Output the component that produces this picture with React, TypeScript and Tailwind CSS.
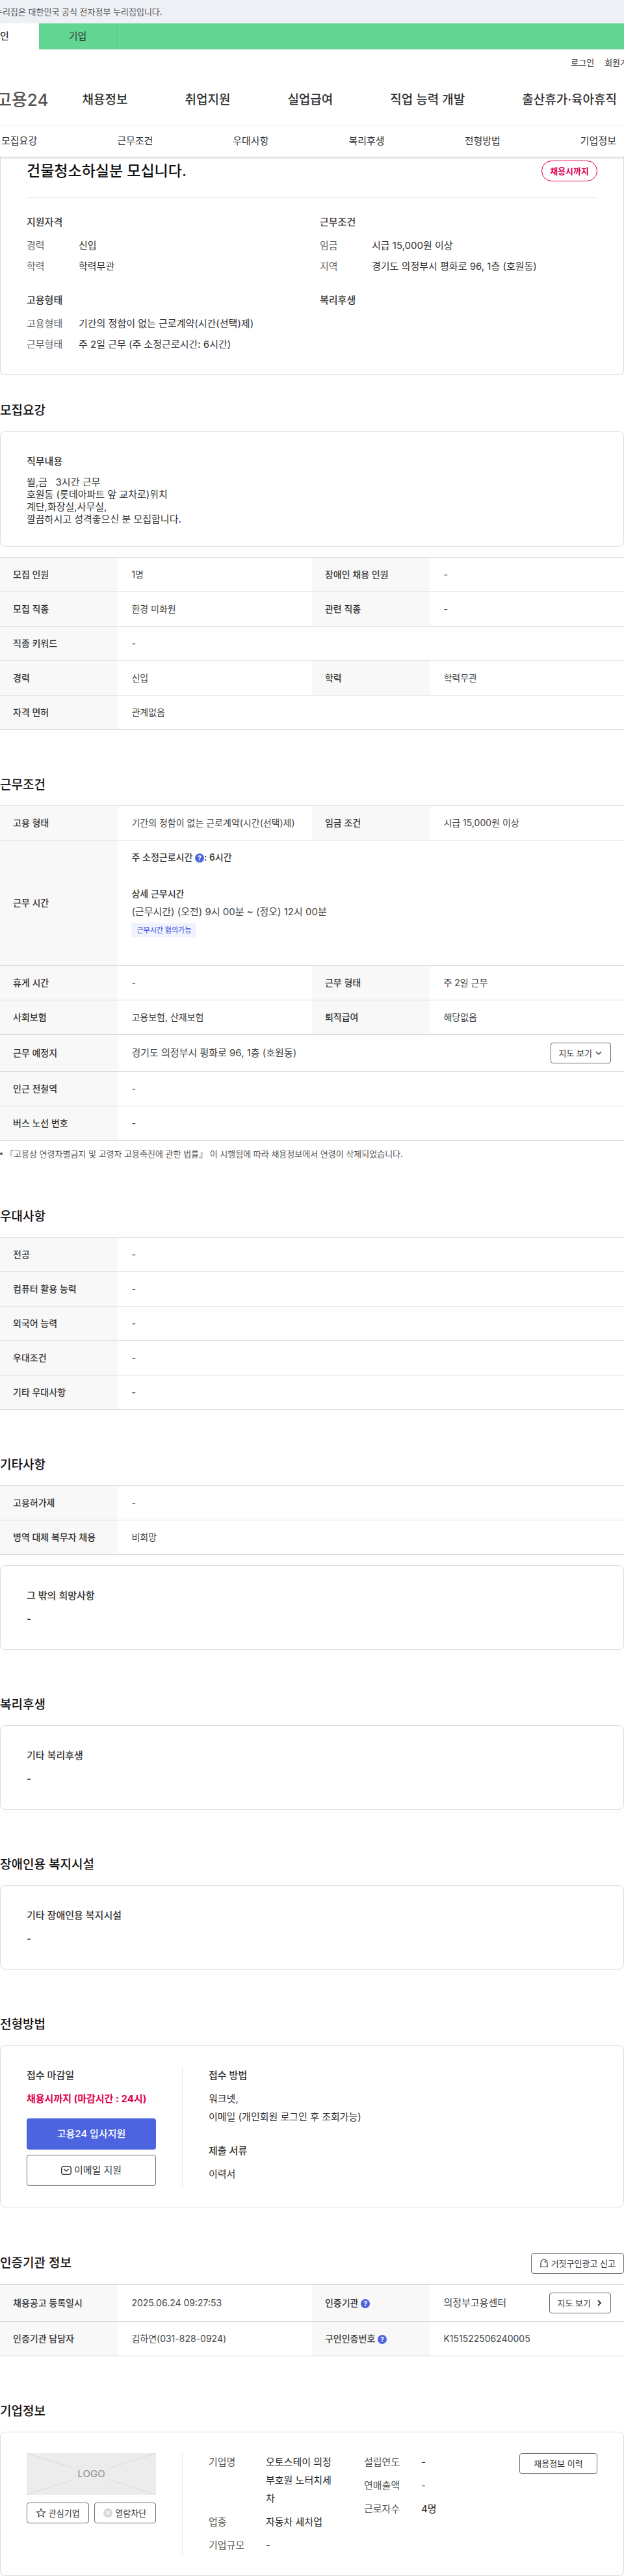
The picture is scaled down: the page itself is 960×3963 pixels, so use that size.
import type { ReactNode } from "react";
import clsx from "clsx";

type Cell = { label: ReactNode; value: ReactNode };

const MAIN_MENU = ["채용정보", "취업지원", "실업급여", "직업 능력 개발", "출산휴가·육아휴직"];
const PAGE_TABS = ["모집요강", "근무조건", "우대사항", "복리후생", "전형방법", "기업정보"];

const SUMMARY = [
  { title: "지원자격", items: [["경력", "신입"], ["학력", "학력무관"]] },
  { title: "근무조건", items: [["임금", "시급 15,000원 이상"], ["지역", "경기도 의정부시 평화로 96, 1층 (호원동)"]] },
  {
    title: "고용형태",
    items: [["고용형태", "기간의 정함이 없는 근로계약(시간(선택)제)"], ["근무형태", "주 2일 근무 (주 소정근로시간: 6시간)"]],
  },
  { title: "복리후생", items: [] },
];

function Help() {
  return (
    <button
      type="button"
      className="inline-flex size-3.5 items-center justify-center rounded-full bg-[#4d64e0] align-middle text-[10px] leading-none font-bold text-white"
    >
      ?
    </button>
  );
}

function SmallButton({ children, className }: { children: ReactNode; className?: string }) {
  return (
    <button
      type="button"
      className={clsx(
        "flex h-8 shrink-0 items-center justify-center rounded border border-[#6b6b6b] bg-white text-[13px] text-[#333]",
        className
      )}
    >
      {children}
    </button>
  );
}

function Section({ title, action, first, children }: { title: string; action?: ReactNode; first?: boolean; children: ReactNode }) {
  return (
    <section className={first ? "pt-10" : "pt-[70px]"}>
      <div className="mb-4 flex items-center justify-between">
        <h2 className="text-[19px] leading-[30px] font-medium text-[#111]">{title}</h2>
        {action}
      </div>
      {children}
    </section>
  );
}

function Card({ children, className }: { children: ReactNode; className?: string }) {
  return <div className={clsx("rounded-lg border border-[#dcdcdc] px-10 py-8", className)}>{children}</div>;
}

function NoteCard({ title, className }: { title: string; className?: string }) {
  return (
    <Card className={className}>
      <h3 className="font-medium">{title}</h3>
      <p className="mt-2 font-medium">-</p>
    </Card>
  );
}

function InfoTable({ rows }: { rows: Cell[][] }) {
  return (
    <table className="w-full table-fixed border-t border-[#dcdcdc] text-sm leading-7">
      <colgroup>
        <col className="w-[19%]" />
        <col className="w-[31%]" />
        <col className="w-[19%]" />
        <col className="w-[31%]" />
      </colgroup>
      <tbody>
        {rows.map((row, i) => (
          <tr key={i} className="border-b border-[#dcdcdc]">
            {row.map((cell, j) => [
              <th key={`h${j}`} scope="row" className="bg-[#f8f8f8] px-5 py-3 text-left font-medium">
                {cell.label}
              </th>,
              <td
                key={`d${j}`}
                colSpan={row.length === 1 ? 3 : 1}
                className={clsx("px-5 py-3 text-[#444]", cell.value === "-" && "font-medium")}
              >
                {cell.value}
              </td>,
            ])}
          </tr>
        ))}
      </tbody>
    </table>
  );
}

function Header() {
  return (
    <header className="relative z-10 bg-white shadow-[0_1px_4px_rgba(0,0,0,0.25)]">
      <div className="overflow-hidden">
        <p className="-ml-2 flex h-9 items-center bg-[#edf1f5] text-[13px] text-[#555]">
          누리집은 대한민국 공식 전자정부 누리집입니다.
        </p>
        <nav className="flex h-10 bg-[#63d694]">
          <a href="#" className="-ml-15 flex w-30 items-center justify-center bg-white font-medium">
            개인
          </a>
          <a href="#" className="flex w-30 items-center justify-center border-r border-[#55c985]">
            기업
          </a>
        </nav>
        <div className="-mr-[18px] flex h-10 items-center justify-end gap-4 text-[13px]">
          <a href="#">로그인</a>
          <a href="#">회원가입</a>
        </div>
        <div className="flex h-19 items-center">
          <a href="#" className="-ml-1.5 text-[26px] font-medium text-[#555]">
            고용24
          </a>
          <nav className="ml-13 flex gap-22 text-[19px] font-medium whitespace-nowrap">
            {MAIN_MENU.map((m) => (
              <a key={m} href="#">
                {m}
              </a>
            ))}
          </nav>
        </div>
      </div>
      <nav className="flex h-12 items-center justify-between border-t border-[#ebebeb] box-content pr-3 pl-0.5">
        {PAGE_TABS.map((t) => (
          <a key={t} href="#">
            {t}
          </a>
        ))}
      </nav>
    </header>
  );
}

function Summary() {
  return (
    <div className="rounded-b-lg border border-t-0 border-[#dcdcdc] px-10 pt-1.5 pb-8">
      <div className="flex items-center justify-between border-b border-[#e8e8e8] pb-6">
        <h1 className="text-[23px] leading-8 font-medium text-[#111]">건물청소하실분 모십니다.</h1>
        <span className="flex h-8 items-center rounded-full border border-[#e0004f] px-3 text-[13px] font-bold text-[#e0004f]">
          채용시까지
        </span>
      </div>
      <div className="mt-6 grid grid-cols-2 gap-6">
        {SUMMARY.map((s) => (
          <div key={s.title}>
            <h3 className="mb-2 font-medium">{s.title}</h3>
            <dl className="flex flex-col gap-1">
              {s.items.map(([k, v]) => (
                <div key={k} className="flex">
                  <dt className="w-20 shrink-0 text-[#666]">{k}</dt>
                  <dd>{v}</dd>
                </div>
              ))}
            </dl>
          </div>
        ))}
      </div>
    </div>
  );
}

function WorkHours() {
  return (
    <div className="pb-[31px]">
      <p className="font-medium text-[#333]">
        주 소정근로시간 <Help />: 6시간
      </p>
      <p className="mt-7 font-medium text-[#333]">상세 근무시간</p>
      <p className="text-[15px]">(근무시간) (오전) 9시 00분 ~ (정오) 12시 00분</p>
      <span className="mt-[3px] flex h-[22px] w-fit items-center rounded bg-[#f1f2ff] px-2 text-[11px] font-medium text-[#4d64e0]">
        근무시간 협의가능
      </span>
    </div>
  );
}

function Logo() {
  return (
    <div className="relative flex h-16 items-center justify-center bg-[#ececec] font-medium text-[#999]">
      <svg className="absolute inset-0 size-full" viewBox="0 0 199 64" fill="none" stroke="#dadada" preserveAspectRatio="none">
        <path d="M0 0L72 23M199 0L127 23M0 64L72 41M199 64L127 41" />
      </svg>
      LOGO
    </div>
  );
}

function Pairs({ items }: { items: string[][] }) {
  return (
    <dl className="flex w-[199px] flex-col gap-2">
      {items.map(([k, v]) => (
        <div key={k} className="flex">
          <dt className="w-22 shrink-0 text-[#555]">{k}</dt>
          <dd className="text-[#222]">{v}</dd>
        </div>
      ))}
    </dl>
  );
}

export default function App() {
  return (
    <div className="overflow-hidden bg-white font-[Inter,'Noto_Sans_CJK_KR',sans-serif] text-[15px] leading-7 text-[#333]">
      <Header />
      <main>
        <Summary />

        <Section title="모집요강" first>
          <Card className="mb-4">
            <h3 className="mb-2 font-medium">직무내용</h3>
            <p className="leading-[19px] whitespace-pre-line">
              월,금 &nbsp; 3시간 근무{"\n"}호원동 (롯데아파트 앞 교차로)위치{"\n"}계단,화장실,사무실,{"\n"}깔끔하시고 성격좋으신 분 모집합니다.
            </p>
          </Card>
          <InfoTable
            rows={[
              [{ label: "모집 인원", value: "1명" }, { label: "장애인 채용 인원", value: "-" }],
              [{ label: "모집 직종", value: "환경 미화원" }, { label: "관련 직종", value: "-" }],
              [{ label: "직종 키워드", value: "-" }],
              [{ label: "경력", value: "신입" }, { label: "학력", value: "학력무관" }],
              [{ label: "자격 면허", value: "관계없음" }],
            ]}
          />
        </Section>

        <Section title="근무조건">
          <InfoTable
            rows={[
              [
                { label: "고용 형태", value: "기간의 정함이 없는 근로계약(시간(선택)제)" },
                { label: "임금 조건", value: "시급 15,000원 이상" },
              ],
              [{ label: "근무 시간", value: <WorkHours /> }],
              [{ label: "휴게 시간", value: "-" }, { label: "근무 형태", value: "주 2일 근무" }],
              [{ label: "사회보험", value: "고용보험, 산재보험" }, { label: "퇴직급여", value: "해당없음" }],
              [
                {
                  label: "근무 예정지",
                  value: (
                    <div className="flex items-center justify-between text-[15px]">
                      경기도 의정부시 평화로 96, 1층 (호원동)
                      <SmallButton className="gap-1 px-3">
                        지도 보기
                        <svg width="12" height="12" viewBox="0 0 12 12" fill="none" stroke="currentColor" strokeWidth="1.3">
                          <path d="M2 4l4 4 4-4" />
                        </svg>
                      </SmallButton>
                    </div>
                  ),
                },
              ],
              [{ label: "인근 전철역", value: "-" }],
              [{ label: "버스 노선 번호", value: "-" }],
            ]}
          />
          <p className="mt-2 flex items-center gap-1 text-[13px] leading-6 text-[#555]">
            <span className="size-1 rounded-full bg-[#555]" />
            『고용상 연령차별금지 및 고령자 고용촉진에 관한 법률』 이 시행됨에 따라 채용정보에서 연령이 삭제되었습니다.
          </p>
        </Section>

        <Section title="우대사항">
          <InfoTable
            rows={[
              [{ label: "전공", value: "-" }],
              [{ label: "컴퓨터 활용 능력", value: "-" }],
              [{ label: "외국어 능력", value: "-" }],
              [{ label: "우대조건", value: "-" }],
              [{ label: "기타 우대사항", value: "-" }],
            ]}
          />
        </Section>

        <Section title="기타사항">
          <InfoTable
            rows={[[{ label: "고용허가제", value: "-" }], [{ label: "병역 대체 복무자 채용", value: "비희망" }]]}
          />
          <NoteCard title="그 밖의 희망사항" className="mt-4" />
        </Section>

        <Section title="복리후생">
          <NoteCard title="기타 복리후생" />
        </Section>

        <Section title="장애인용 복지시설">
          <NoteCard title="기타 장애인용 복지시설" />
        </Section>

        <Section title="전형방법">
          <Card className="flex">
            <div className="mr-10 w-[199px] shrink-0">
              <h3 className="font-medium">접수 마감일</h3>
              <p className="mt-2 font-bold whitespace-nowrap text-[#e0004f]">채용시까지 (마감시간 : 24시)</p>
              <button type="button" className="mt-4 h-12 w-full rounded bg-[#4d64e0] font-medium text-white">
                고용24 입사지원
              </button>
              <button
                type="button"
                className="mt-2 flex h-12 w-full items-center justify-center gap-1 rounded border border-[#6b6b6b]"
              >
                <svg width="16" height="14" viewBox="0 0 16 14" fill="none" stroke="currentColor" strokeWidth="1.5">
                  <rect x="0.75" y="0.75" width="14.5" height="12.5" rx="3.5" />
                  <path d="M4.5 5.2L8 8l3.5-2.8" />
                </svg>
                이메일 지원
              </button>
            </div>
            <div className="border-l border-[#e8e8e8] pl-10">
              <h3 className="font-medium">접수 방법</h3>
              <p className="mt-2">워크넷,</p>
              <p>이메일 (개인회원 로그인 후 조회가능)</p>
              <h3 className="mt-6 font-medium">제출 서류</h3>
              <p className="mt-2">이력서</p>
            </div>
          </Card>
        </Section>

        <Section
          title="인증기관 정보"
          action={
            <SmallButton className="gap-1 px-3">
              <svg width="14" height="14" viewBox="0 0 14 14" fill="none" stroke="currentColor" strokeWidth="1.2">
                <path d="M2 12.4V6.2a5 5 0 0 1 10 0v6.2M0.5 12.5h13M7.4 3.8c1.3.1 2.2 1 2.3 2.2" />
              </svg>
              거짓구인광고 신고
            </SmallButton>
          }
        >
          <InfoTable
            rows={[
              [
                { label: "채용공고 등록일시", value: "2025.06.24 09:27:53" },
                {
                  label: (
                    <>
                      인증기관 <Help />
                    </>
                  ),
                  value: (
                    <div className="flex items-center justify-between text-[15px]">
                      의정부고용센터
                      <SmallButton className="gap-1 px-3">
                        지도 보기
                        <svg width="14" height="12" viewBox="0 0 14 12" fill="none" stroke="currentColor" strokeWidth="1.8">
                          <path d="M7 2l4 4-4 4" />
                        </svg>
                      </SmallButton>
                    </div>
                  ),
                },
              ],
              [
                { label: "인증기관 담당자", value: "김하연(031-828-0924)" },
                {
                  label: (
                    <>
                      구인인증번호 <Help />
                    </>
                  ),
                  value: "K151522506240005",
                },
              ],
            ]}
          />
        </Section>

        <Section title="기업정보">
          <Card className="flex">
            <div className="mr-10 w-[199px] shrink-0">
              <Logo />
              <div className="mt-3 flex gap-2">
                <SmallButton className="flex-1 gap-1">
                  <svg width="16" height="16" viewBox="0 0 16 16" fill="none" stroke="currentColor" strokeWidth="1.1">
                    <path d="M8 1.6l1.8 4.3 4.7.4-3.6 3 1.1 4.6L8 11.4l-4 2.5 1.1-4.6-3.6-3 4.7-.4z" />
                  </svg>
                  관심기업
                </SmallButton>
                <SmallButton className="flex-1 gap-1">
                  <svg width="14" height="14" viewBox="0 0 14 14" fill="none">
                    <circle cx="7" cy="7" r="7" fill="#d8d8d8" />
                    <path d="M4.2 4.2l5.6 5.6M9.8 4.2L4.2 9.8" stroke="#fff" strokeWidth="1.3" />
                  </svg>
                  열람차단
                </SmallButton>
              </div>
            </div>
            <div className="flex flex-1 items-start gap-10 border-l border-[#e8e8e8] pl-10">
              <Pairs items={[["기업명", "오토스테이 의정부호원 노터치세차"], ["업종", "자동차 세차업"], ["기업규모", "-"]]} />
              <Pairs items={[["설립연도", "-"], ["연매출액", "-"], ["근로자수", "4명"]]} />
              <SmallButton className="w-30">채용정보 이력</SmallButton>
            </div>
          </Card>
        </Section>
      </main>
    </div>
  );
}
